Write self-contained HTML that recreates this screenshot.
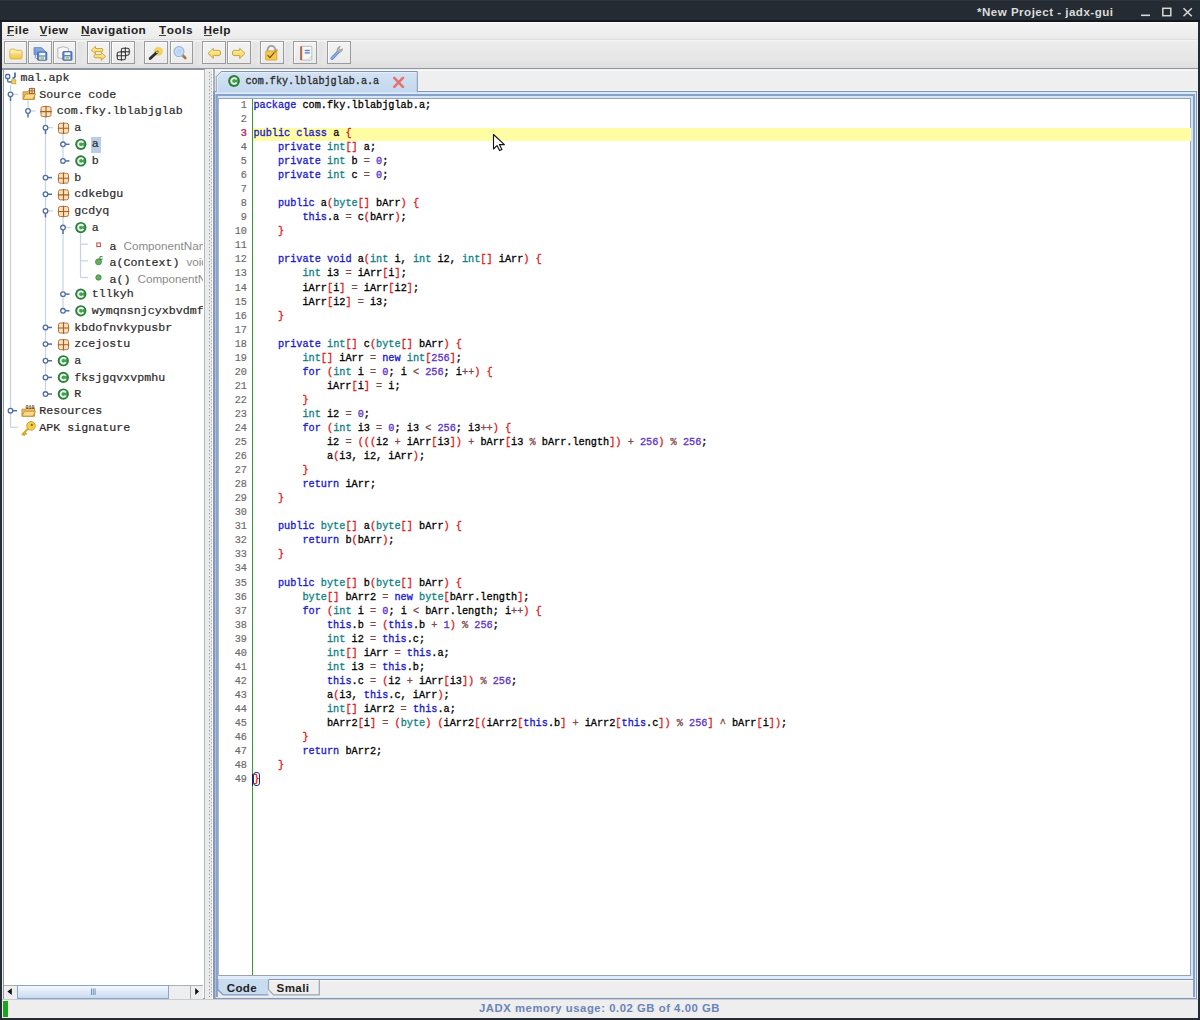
<!DOCTYPE html><html><head><meta charset="utf-8"><style>
*{box-sizing:border-box}
html,body{margin:0;padding:0}
body{width:1200px;height:1020px;overflow:hidden;background:#252b32;position:relative;font-family:"Liberation Sans",sans-serif}
.a{position:absolute}
svg{position:absolute;overflow:visible}
b{font-weight:normal}
#title{left:977px;top:5.3px;color:#dcdcdc;font:bold 11.6px "Liberation Sans",sans-serif;letter-spacing:0.47px;white-space:nowrap}
.menu{position:absolute;top:23.1px;font:bold 11.8px "Liberation Sans",sans-serif;letter-spacing:0.5px;color:#222;white-space:nowrap}
.menu u{text-decoration:none;position:relative}
.menu u:after{content:"";position:absolute;left:0;right:0.5px;top:12px;height:1px;background:#444}
.tb{position:absolute;top:41.4px;width:22.8px;height:23px;border:1px solid #9b9b9b;background:linear-gradient(#f3f3f3,#ebebeb);box-shadow:inset 1px 1px 0 #fdfdfd}
.ln{position:absolute;left:218px;width:29px;text-align:right;font:10.22px "Liberation Mono",monospace;color:#686868;-webkit-text-stroke:0.15px;line-height:14.04px;margin:0}
#src{position:absolute;left:253.4px;top:97.93px;font:10.22px "Liberation Mono",monospace;-webkit-text-stroke:0.3px;line-height:14.04px;white-space:pre;color:#000;margin:0}
.k{color:#1818c8}.t{color:#108282}.s{color:#e01818}.o{color:#804848}.n{color:#6030c4}
.tr{position:absolute;font:11.67px "Liberation Mono",monospace;color:#2a2a2a;white-space:nowrap;-webkit-text-stroke:0.2px;line-height:14px}
.gray{font-family:"Liberation Sans",sans-serif;color:#8a8a8a;-webkit-text-stroke:0}
</style></head><body>
<div class="a" style="left:0;top:0;width:1200px;height:1px;background:#2e353c"></div>
<div class="a" style="left:0;top:20px;width:1200px;height:2px;background:#13191f"></div>
<div id="title" class="a">*New Project - jadx-gui</div>
<svg style="left:0;top:0" width="1200" height="22"><rect x="1141" y="14.5" width="9" height="1.6" fill="#d8d8d8"/><rect x="1162.8" y="8.3" width="8" height="7.4" fill="none" stroke="#d8d8d8" stroke-width="1.5"/><path d="M1183.5 8.2 L1191.8 16.2 M1191.8 8.2 L1183.5 16.2" stroke="#d8d8d8" stroke-width="1.5"/></svg>
<div class="a" style="left:2px;top:22px;width:1196px;height:996px;background:#eeeeee"></div>
<div class="a" style="left:2px;top:22px;width:1196px;height:17px;background:linear-gradient(#fdfdfd 0,#f4f4f4 2px,#ebebeb 16px)"></div>
<div class="a" style="left:2px;top:38.5px;width:1196px;height:1px;background:#dedede"></div>
<div class="menu" style="left:7px"><u>F</u>ile</div>
<div class="menu" style="left:39.5px"><u>V</u>iew</div>
<div class="menu" style="left:81px"><u>N</u>avigation</div>
<div class="menu" style="left:159px"><u>T</u>ools</div>
<div class="menu" style="left:203.5px"><u>H</u>elp</div>
<div class="a" style="left:2px;top:39.5px;width:1196px;height:29px;background:linear-gradient(#f6f6f6 0,#ececec 2px,#e6e6e6 20px,#dedede 28px)"></div>
<div class="a" style="left:2px;top:68.3px;width:1196px;height:1.4px;background:#8d97a1"></div>
<div class="a" style="left:78.3px;top:41.5px;width:6.5px;height:23px;background:linear-gradient(90deg,#e2e2e2,#e8e8e8)"></div>
<div class="a" style="left:136.2px;top:41.5px;width:6.5px;height:23px;background:linear-gradient(90deg,#e2e2e2,#e8e8e8)"></div>
<div class="a" style="left:195.0px;top:41.5px;width:6.5px;height:23px;background:linear-gradient(90deg,#e2e2e2,#e8e8e8)"></div>
<div class="a" style="left:252.6px;top:41.5px;width:6.5px;height:23px;background:linear-gradient(90deg,#e2e2e2,#e8e8e8)"></div>
<div class="a" style="left:285.6px;top:41.5px;width:6.5px;height:23px;background:linear-gradient(90deg,#e2e2e2,#e8e8e8)"></div>
<div class="a" style="left:318.6px;top:41.5px;width:6.5px;height:23px;background:linear-gradient(90deg,#e2e2e2,#e8e8e8)"></div>
<div class="tb" style="left:3.6px;width:23.799999999999997px"></div>
<div class="tb" style="left:28.3px;width:23.400000000000002px"></div>
<div class="tb" style="left:53px;width:23.400000000000006px"></div>
<div class="tb" style="left:86.6px;width:23.80000000000001px"></div>
<div class="tb" style="left:111.2px;width:23.39999999999999px"></div>
<div class="tb" style="left:144.25px;width:24.150000000000006px"></div>
<div class="tb" style="left:169.5px;width:23.0px"></div>
<div class="tb" style="left:202.2px;width:24.0px"></div>
<div class="tb" style="left:227.2px;width:23.400000000000006px"></div>
<div class="tb" style="left:260.3px;width:23.69999999999999px"></div>
<div class="tb" style="left:293.2px;width:24.100000000000023px"></div>
<div class="tb" style="left:326.5px;width:24.100000000000023px"></div>
<svg style="left:0;top:0" width="1200" height="70"><defs><linearGradient id="fg" x1="0" y1="0" x2="0" y2="1"><stop offset="0" stop-color="#fbf0b8"/><stop offset="1" stop-color="#f0c83a"/></linearGradient><linearGradient id="ag" x1="0" y1="0" x2="0" y2="1"><stop offset="0" stop-color="#fff4b0"/><stop offset="1" stop-color="#f4cc50"/></linearGradient></defs><path d="M9.8 50.5 q0 -1.5 1.5 -1.5 h3.2 l1.2 1.3 h4.8 q1.5 0 1.5 1.5 v5.8 q0 1.3 -1.3 1.3 h-9.6 q-1.3 0 -1.3 -1.3 z" fill="url(#fg)" stroke="#dcae48" stroke-width="0.9"/><path d="M10.3 52.2 h11" stroke="#fff8d0" stroke-width="0.8"/><path d="M34 47.6 h7.5 l5 5 v2 h-12.5 z" fill="#86a6e0" stroke="#6486c8" stroke-width="0.8"/><path d="M35.3 49 v8.5 l2 2 h0" fill="none" stroke="#6a8ed0" stroke-width="1"/><rect x="37.5" y="52" width="9.3" height="8.3" rx="0.8" fill="#5c82c8" stroke="#40609e" stroke-width="0.8"/><rect x="39.2" y="52.8" width="6" height="2.6" fill="#f4f8ff"/><rect x="39.2" y="56.6" width="6" height="3" fill="#e6f2e0"/><rect x="40.4" y="57.4" width="3.6" height="1.4" fill="#8cc040"/><path d="M57.8 48.2 q5.2 -3 10.6 0 v9.5 q-5.3 2.2 -10.6 0 z" fill="#f8f8f8" stroke="#a8a8a8" stroke-width="0.8"/><rect x="62.8" y="51.5" width="9.2" height="8.8" rx="0.8" fill="#5c82c8" stroke="#40609e" stroke-width="0.8"/><rect x="64.5" y="52.4" width="5.8" height="2.6" fill="#f4f8ff"/><rect x="64.5" y="56.4" width="5.8" height="3" fill="#e6f2e0"/><rect x="65.6" y="57.2" width="3.6" height="1.4" fill="#8cc040"/><path d="M91.3 50.2 L95.5 46.2 V48.5 H102 Q102.8 48.5 102.8 50 Q102.8 51.6 102 51.6 H95.5 V53.8 Z" fill="url(#ag)" stroke="#c8a038" stroke-width="0.9" stroke-linejoin="round"/><path d="M105.6 56.4 L101.2 52.4 V54.6 H94.8 Q94 54.6 94 56.2 Q94 57.8 94.8 57.8 H101.2 V60.4 Z" fill="url(#ag)" stroke="#c8a038" stroke-width="0.9" stroke-linejoin="round"/><g fill="none" stroke="#353535" stroke-width="1.05"><rect x="121.4" y="48.2" width="7.8" height="7" rx="1.6"/><path d="M125.3 47.3 v9 M120.6 51.7 h9.6"/><rect x="117.3" y="51.9" width="8.2" height="7.8" rx="1.8" fill="#f0f0f0"/><path d="M121.4 50.8 v10 M116.4 55.8 h10"/></g><circle cx="158.4" cy="51.3" r="4.4" fill="#f2cc38" opacity="0.85"/><circle cx="158.4" cy="51.3" r="2.2" fill="#f8dc60"/><path d="M150.2 58.6 L157.2 52" stroke="#2e2e2e" stroke-width="2.8" stroke-linecap="round"/><path d="M156.4 52.6 L157.6 51.6" stroke="#f8f8f0" stroke-width="1.6"/><path d="M182.2 54.8 L185.3 58" stroke="#a87838" stroke-width="2.6" stroke-linecap="round"/><circle cx="179" cy="51.6" r="4.9" fill="#cde0f8" stroke="#98b4e0" stroke-width="1.2"/><circle cx="179" cy="51.6" r="2.8" fill="#bcd4f4"/><path d="M208 53.4 L213.3 48.3 V50.4 H219 Q220.6 50.4 220.6 53 Q220.6 55.6 219 55.6 H213.3 V58.5 Z" fill="url(#ag)" stroke="#c8a038" stroke-width="0.95" stroke-linejoin="round"/><path d="M245 53.4 L239.7 48.3 V50.4 H234 Q232.4 50.4 232.4 53 Q232.4 55.6 234 55.6 H239.7 V58.5 Z" fill="url(#ag)" stroke="#c8a038" stroke-width="0.95" stroke-linejoin="round"/><path d="M267.5 51.5 V49.8 a3.9 3.9 0 0 1 7.8 0 V51.5" fill="none" stroke="#9c9c9c" stroke-width="1.7"/><rect x="265.6" y="50.9" width="11.2" height="9.2" rx="0.8" fill="#f4c84a" stroke="#d4a030" stroke-width="0.8"/><path d="M267.6 55 l2.3 2.6 l5.6 -6.4" fill="none" stroke="#6a4a10" stroke-width="1.1"/><path d="M274.2 52.8 L277.5 49.5" stroke="#e08838" stroke-width="1.6"/><rect x="300.4" y="46.3" width="11.4" height="13.8" rx="0.8" fill="#f8f8f8" stroke="#b0b0b0" stroke-width="0.8"/><path d="M301.2 46.4 v13.6" stroke="#b06a48" stroke-width="2"/><rect x="304.8" y="49.8" width="5" height="1.4" fill="#5a86d0"/><rect x="304.8" y="52.2" width="5" height="1.4" fill="#5a86d0"/><path d="M309 58.5 l2 -2" stroke="#a0a8b0" stroke-width="0.8"/><path d="M332 58.3 L338.5 51.6" stroke="#6d95d8" stroke-width="3.3" stroke-linecap="round"/><path d="M332 58.3 L338.5 51.6" stroke="#9cbcee" stroke-width="1" stroke-linecap="round"/><path d="M338.2 52.2 a3.4 3.4 0 0 1 2 -5.8 l-1.3 2.2 l1.3 1.4 l2.3 -1.2 a3.4 3.4 0 0 1 -4.3 3.4 z" fill="#b8b8b8" stroke="#8a8a8a" stroke-width="0.7"/></svg>
<div class="a" style="left:3px;top:69px;width:202px;height:930px;background:#fff;border:1px solid #8d97a1;border-top-width:1.5px;border-right:1.8px solid #b0b8c0"></div>
<div class="a" style="left:205px;top:69px;width:8px;height:930px;background:#ececec"></div>
<svg style="left:209px;top:72px" width="4" height="925"><defs><pattern id="dots" width="4" height="3.5" patternUnits="userSpaceOnUse"><rect x="0" y="0" width="1" height="1.2" fill="#8a8a8a"/><rect x="2" y="1.75" width="1" height="1.2" fill="#9a9a9a"/></pattern></defs><rect width="4" height="925" fill="url(#dots)"/></svg>
<div class="a" style="left:4px;top:70px;width:199px;height:915px;overflow:hidden">
<div class="a" style="left:-4px;top:-70px;width:1200px;height:1020px">
<div class="a" style="left:90.5px;top:137px;width:10.5px;height:16px;background:#b8cee6"></div>
<svg style="left:0;top:0" width="1200" height="1020"><path d="M10.5 84.68 V427.33" stroke="#c5d2e3" stroke-width="1.2"/><path d="M28.0 100.33000000000001 V110.98" stroke="#c5d2e3" stroke-width="1.2"/><path d="M45.5 116.98 V394.03" stroke="#c5d2e3" stroke-width="1.2"/><path d="M63.0 133.63 V160.93" stroke="#c5d2e3" stroke-width="1.2"/><path d="M63.0 216.88 V310.78" stroke="#c5d2e3" stroke-width="1.2"/><path d="M80.5 233.53 V277.48" stroke="#c5d2e3" stroke-width="1.2"/><g transform="translate(5,72)"><rect x="0.7" y="2.5" width="4" height="4" rx="1" fill="none" stroke="#4a6ea8" stroke-width="1.3"/><path d="M2.7 6.5 V9.3 Q2.7 10 4 10 H7" fill="none" stroke="#4a6ea8" stroke-width="1.3"/><rect x="6.8" y="7.8" width="4" height="4" fill="#f6d060" stroke="#c89a30" stroke-width="0.8"/><path d="M10 0.5 V4.5 Q10 6 8.3 6 H7.5" fill="none" stroke="#2a5a90" stroke-width="1.5"/></g><path d="M13.0 94.33000000000001 H18.0" stroke="#c5d2e3" stroke-width="1.2"/><path d="M10.5 96.63000000000001 V100.83000000000001" stroke="#4f6ea6" stroke-width="1.5"/><circle cx="10.5" cy="94.33000000000001" r="2.3" fill="#fff" stroke="#4f6ea6" stroke-width="1.3"/><g transform="translate(22.5,87.83000000000001)"><path d="M0.5 4 h4 l1 -1 h6.5 v8.5 h-11.5 z" fill="#f0c060" stroke="#c08830" stroke-width="0.9"/><path d="M0.5 11.5 L3 6 H13 L10.5 11.5 Z" fill="#fadb8a" stroke="#c08830" stroke-width="0.9"/><rect x="7" y="0.5" width="5" height="5" fill="#f8d8b0" stroke="#8a5020" stroke-width="0.8"/><path d="M9.5 0 v6 M6.5 3 h6" stroke="#8a5020" stroke-width="0.7"/></g><path d="M30.5 110.98 H35.5" stroke="#c5d2e3" stroke-width="1.2"/><path d="M28.0 113.28 V117.48" stroke="#4f6ea6" stroke-width="1.5"/><circle cx="28.0" cy="110.98" r="2.3" fill="#fff" stroke="#4f6ea6" stroke-width="1.3"/><g transform="translate(40.5,106.08)"><rect x="0.5" y="0.5" width="10" height="10" rx="1.8" fill="#fbe0b8" stroke="#b8743c" stroke-width="1"/><path d="M5.5 -0.3 V11.3 M-0.3 5.5 H11.3" stroke="#a0602c" stroke-width="1.1"/></g><path d="M48.0 127.63 H53.0" stroke="#c5d2e3" stroke-width="1.2"/><path d="M45.5 129.93 V134.13" stroke="#4f6ea6" stroke-width="1.5"/><circle cx="45.5" cy="127.63" r="2.3" fill="#fff" stroke="#4f6ea6" stroke-width="1.3"/><g transform="translate(58.0,122.72999999999999)"><rect x="0.5" y="0.5" width="10" height="10" rx="1.8" fill="#fbe0b8" stroke="#b8743c" stroke-width="1"/><path d="M5.5 -0.3 V11.3 M-0.3 5.5 H11.3" stroke="#a0602c" stroke-width="1.1"/></g><path d="M65.3 144.28 H69.5" stroke="#4f6ea6" stroke-width="1.5"/><circle cx="63.0" cy="144.28" r="2.3" fill="#fff" stroke="#4f6ea6" stroke-width="1.3"/><circle cx="80.8" cy="144.28" r="5.6" fill="#2a7e38"/><circle cx="80.8" cy="144.28" r="4" fill="#48a058"/><path d="M83.3 142.78 A2.8 2.8 0 1 0 83.3 145.78" fill="none" stroke="#eef8ee" stroke-width="1.8"/><path d="M65.3 160.93 H69.5" stroke="#4f6ea6" stroke-width="1.5"/><circle cx="63.0" cy="160.93" r="2.3" fill="#fff" stroke="#4f6ea6" stroke-width="1.3"/><circle cx="80.8" cy="160.93" r="5.6" fill="#2a7e38"/><circle cx="80.8" cy="160.93" r="4" fill="#48a058"/><path d="M83.3 159.43 A2.8 2.8 0 1 0 83.3 162.43" fill="none" stroke="#eef8ee" stroke-width="1.8"/><path d="M47.8 177.57999999999998 H52.0" stroke="#4f6ea6" stroke-width="1.5"/><circle cx="45.5" cy="177.57999999999998" r="2.3" fill="#fff" stroke="#4f6ea6" stroke-width="1.3"/><g transform="translate(58.0,172.67999999999998)"><rect x="0.5" y="0.5" width="10" height="10" rx="1.8" fill="#fbe0b8" stroke="#b8743c" stroke-width="1"/><path d="M5.5 -0.3 V11.3 M-0.3 5.5 H11.3" stroke="#a0602c" stroke-width="1.1"/></g><path d="M47.8 194.23 H52.0" stroke="#4f6ea6" stroke-width="1.5"/><circle cx="45.5" cy="194.23" r="2.3" fill="#fff" stroke="#4f6ea6" stroke-width="1.3"/><g transform="translate(58.0,189.32999999999998)"><rect x="0.5" y="0.5" width="10" height="10" rx="1.8" fill="#fbe0b8" stroke="#b8743c" stroke-width="1"/><path d="M5.5 -0.3 V11.3 M-0.3 5.5 H11.3" stroke="#a0602c" stroke-width="1.1"/></g><path d="M48.0 210.88 H53.0" stroke="#c5d2e3" stroke-width="1.2"/><path d="M45.5 213.18 V217.38" stroke="#4f6ea6" stroke-width="1.5"/><circle cx="45.5" cy="210.88" r="2.3" fill="#fff" stroke="#4f6ea6" stroke-width="1.3"/><g transform="translate(58.0,205.98)"><rect x="0.5" y="0.5" width="10" height="10" rx="1.8" fill="#fbe0b8" stroke="#b8743c" stroke-width="1"/><path d="M5.5 -0.3 V11.3 M-0.3 5.5 H11.3" stroke="#a0602c" stroke-width="1.1"/></g><path d="M65.5 227.53 H70.5" stroke="#c5d2e3" stroke-width="1.2"/><path d="M63.0 229.83 V234.03" stroke="#4f6ea6" stroke-width="1.5"/><circle cx="63.0" cy="227.53" r="2.3" fill="#fff" stroke="#4f6ea6" stroke-width="1.3"/><circle cx="80.8" cy="227.53" r="5.6" fill="#2a7e38"/><circle cx="80.8" cy="227.53" r="4" fill="#48a058"/><path d="M83.3 226.03 A2.8 2.8 0 1 0 83.3 229.03" fill="none" stroke="#eef8ee" stroke-width="1.8"/><path d="M80.5 244.18 H88.0" stroke="#c5d2e3" stroke-width="1.2"/><rect x="96.8" y="242.98000000000002" width="3.6" height="3.6" fill="#fff" stroke="#d04040" stroke-width="1"/><path d="M80.5 260.83 H88.0" stroke="#c5d2e3" stroke-width="1.2"/><circle cx="98.5" cy="261.83" r="3" fill="#60b060" stroke="#3a8a3a" stroke-width="0.8"/><text x="99" y="259.63" font-family="Liberation Sans" font-size="7" font-weight="bold" fill="#2a7a2a">c</text><path d="M80.5 277.48 H88.0" stroke="#c5d2e3" stroke-width="1.2"/><circle cx="98.5" cy="277.48" r="2.7" fill="#60b060" stroke="#3a8a3a" stroke-width="0.8"/><path d="M65.3 294.13 H69.5" stroke="#4f6ea6" stroke-width="1.5"/><circle cx="63.0" cy="294.13" r="2.3" fill="#fff" stroke="#4f6ea6" stroke-width="1.3"/><circle cx="80.8" cy="294.13" r="5.6" fill="#2a7e38"/><circle cx="80.8" cy="294.13" r="4" fill="#48a058"/><path d="M83.3 292.63 A2.8 2.8 0 1 0 83.3 295.63" fill="none" stroke="#eef8ee" stroke-width="1.8"/><path d="M65.3 310.78 H69.5" stroke="#4f6ea6" stroke-width="1.5"/><circle cx="63.0" cy="310.78" r="2.3" fill="#fff" stroke="#4f6ea6" stroke-width="1.3"/><circle cx="80.8" cy="310.78" r="5.6" fill="#2a7e38"/><circle cx="80.8" cy="310.78" r="4" fill="#48a058"/><path d="M83.3 309.28 A2.8 2.8 0 1 0 83.3 312.28" fill="none" stroke="#eef8ee" stroke-width="1.8"/><path d="M47.8 327.42999999999995 H52.0" stroke="#4f6ea6" stroke-width="1.5"/><circle cx="45.5" cy="327.42999999999995" r="2.3" fill="#fff" stroke="#4f6ea6" stroke-width="1.3"/><g transform="translate(58.0,322.53)"><rect x="0.5" y="0.5" width="10" height="10" rx="1.8" fill="#fbe0b8" stroke="#b8743c" stroke-width="1"/><path d="M5.5 -0.3 V11.3 M-0.3 5.5 H11.3" stroke="#a0602c" stroke-width="1.1"/></g><path d="M47.8 344.08 H52.0" stroke="#4f6ea6" stroke-width="1.5"/><circle cx="45.5" cy="344.08" r="2.3" fill="#fff" stroke="#4f6ea6" stroke-width="1.3"/><g transform="translate(58.0,339.18)"><rect x="0.5" y="0.5" width="10" height="10" rx="1.8" fill="#fbe0b8" stroke="#b8743c" stroke-width="1"/><path d="M5.5 -0.3 V11.3 M-0.3 5.5 H11.3" stroke="#a0602c" stroke-width="1.1"/></g><path d="M47.8 360.72999999999996 H52.0" stroke="#4f6ea6" stroke-width="1.5"/><circle cx="45.5" cy="360.72999999999996" r="2.3" fill="#fff" stroke="#4f6ea6" stroke-width="1.3"/><circle cx="63.3" cy="360.72999999999996" r="5.6" fill="#2a7e38"/><circle cx="63.3" cy="360.72999999999996" r="4" fill="#48a058"/><path d="M65.8 359.22999999999996 A2.8 2.8 0 1 0 65.8 362.22999999999996" fill="none" stroke="#eef8ee" stroke-width="1.8"/><path d="M47.8 377.38 H52.0" stroke="#4f6ea6" stroke-width="1.5"/><circle cx="45.5" cy="377.38" r="2.3" fill="#fff" stroke="#4f6ea6" stroke-width="1.3"/><circle cx="63.3" cy="377.38" r="5.6" fill="#2a7e38"/><circle cx="63.3" cy="377.38" r="4" fill="#48a058"/><path d="M65.8 375.88 A2.8 2.8 0 1 0 65.8 378.88" fill="none" stroke="#eef8ee" stroke-width="1.8"/><path d="M47.8 394.03 H52.0" stroke="#4f6ea6" stroke-width="1.5"/><circle cx="45.5" cy="394.03" r="2.3" fill="#fff" stroke="#4f6ea6" stroke-width="1.3"/><circle cx="63.3" cy="394.03" r="5.6" fill="#2a7e38"/><circle cx="63.3" cy="394.03" r="4" fill="#48a058"/><path d="M65.8 392.53 A2.8 2.8 0 1 0 65.8 395.53" fill="none" stroke="#eef8ee" stroke-width="1.8"/><path d="M12.8 410.68 H17.0" stroke="#4f6ea6" stroke-width="1.5"/><circle cx="10.5" cy="410.68" r="2.3" fill="#fff" stroke="#4f6ea6" stroke-width="1.3"/><g transform="translate(21.5,404.18)"><path d="M0.5 5 h4 l1 -1 h7.5 v8 h-12.5 z" fill="#f0c060" stroke="#c08830" stroke-width="0.9"/><path d="M0.5 12 L3 7 H14 L11.5 12 Z" fill="#fadb8a" stroke="#c08830" stroke-width="0.9"/><text x="4" y="4.5" font-family="Liberation Mono" font-size="5" font-weight="bold" fill="#5a4020">010</text></g><path d="M10.5 427.33 H18.0" stroke="#c5d2e3" stroke-width="1.2"/><g transform="translate(21.0,420.83)"><circle cx="10" cy="5" r="4.3" fill="#f6d050" stroke="#c89a20" stroke-width="0.9"/><circle cx="10.8" cy="4.2" r="1.2" fill="#a07010"/><path d="M7 8 L1.5 13.5 M3.5 11.5 l1.5 1.5 M2 13 l1.2 1.2" stroke="#d8a828" stroke-width="2" stroke-linecap="round"/></g></svg>
<div class="tr" style="left:20.5px;top:70.88000000000001px">mal.apk</div>
<div class="tr" style="left:39.3px;top:87.53000000000002px">Source code</div>
<div class="tr" style="left:56.8px;top:104.18px">com.fky.lblabjglab</div>
<div class="tr" style="left:74.3px;top:120.83px">a</div>
<div class="tr" style="left:91.8px;top:137.48px">a</div>
<div class="tr" style="left:91.8px;top:154.13px">b</div>
<div class="tr" style="left:74.3px;top:170.77999999999997px">b</div>
<div class="tr" style="left:74.3px;top:187.42999999999998px">cdkebgu</div>
<div class="tr" style="left:74.3px;top:204.07999999999998px">gcdyq</div>
<div class="tr" style="left:91.8px;top:220.73px">a</div>
<div class="tr" style="left:109.5px;top:238.68px">a <span class="gray">ComponentName</span></div>
<div class="tr" style="left:109.5px;top:255.32999999999998px">a(Context) <span class="gray">void</span></div>
<div class="tr" style="left:109.5px;top:271.98px">a() <span class="gray">ComponentName</span></div>
<div class="tr" style="left:91.8px;top:287.33px">tllkyh</div>
<div class="tr" style="left:91.8px;top:303.97999999999996px">wymqnsnjcyxbvdmf</div>
<div class="tr" style="left:74.3px;top:320.62999999999994px">kbdofnvkypusbr</div>
<div class="tr" style="left:74.3px;top:337.28px">zcejostu</div>
<div class="tr" style="left:74.3px;top:353.92999999999995px">a</div>
<div class="tr" style="left:74.3px;top:370.58px">fksjgqvxvpmhu</div>
<div class="tr" style="left:74.3px;top:387.22999999999996px">R</div>
<div class="tr" style="left:39.3px;top:403.88px">Resources</div>
<div class="tr" style="left:39.3px;top:420.53px">APK signature</div>
</div></div>
<div class="a" style="left:4px;top:985px;width:199px;height:14px;background:#eeeeee;border-top:1px solid #a8b0b8"></div>
<div class="a" style="left:17px;top:985px;width:152px;height:13.5px;background:linear-gradient(#f4f8fd,#c8daf0);border:1px solid #8da4c8"></div>
<div class="a" style="left:189.5px;top:985.5px;width:1px;height:13px;background:#a8b0b8"></div>
<svg style="left:0;top:0" width="1200" height="1020"><path d="M11.8 988.3 V995 L7.4 991.6 Z" fill="#111"/><path d="M195.2 988 V995 L199 991.5 Z" fill="#111"/><path d="M91.5 988.5 v6.5 M93.3 988.5 v6.5 M95.1 988.5 v6.5" stroke="#6a86b8" stroke-width="0.9"/></svg>
<div class="a" style="left:212.5px;top:69.4px;width:985.5px;height:930px;background:#efefef"></div>
<div class="a" style="left:213.1px;top:69.4px;width:1.5px;height:22px;background:#a8b0b8"></div>
<div class="a" style="left:214.6px;top:69.6px;width:983px;height:1px;background:#fafafa"></div>
<div class="a" style="left:214.6px;top:90px;width:983px;height:1px;background:#eef6fd"></div>
<div class="a" style="left:213.1px;top:90.9px;width:984.1999999999999px;height:908.6px;background:#8898b4"></div>
<div class="a" style="left:214.8px;top:91.9px;width:981.5px;height:906.4px;background:#dce9f9"></div>
<div class="a" style="left:216.0px;top:94.0px;width:978.8px;height:904.3px;background:#86a2cc"></div>
<div class="a" style="left:217.3px;top:96.0px;width:975.7px;height:902.3px;background:#d2e6fa"></div>
<div class="a" style="left:217.3px;top:97.8px;width:974.0px;height:878.2px;background:#9aa4b0"></div>
<div class="a" style="left:214.8px;top:94.0px;width:1.6999999999999886px;height:904.3px;background:#a4c0e8"></div>
<div class="a" style="left:216.5px;top:96.0px;width:1.5px;height:902.3px;background:#90a8cc"></div>
<div class="a" style="left:218.0px;top:97.8px;width:1.0px;height:878.2px;background:#aab4c4"></div>
<div class="a" style="left:218.5px;top:99.0px;width:971.9000000000001px;height:876.0px;background:#ffffff"></div>
<div class="a" style="left:212.0px;top:69.4px;width:1.0999999999999943px;height:930.1px;background:#f8fbff"></div>
<div class="a" style="left:218.0px;top:976.0px;width:975.0px;height:2.5px;background:#e0ecfc"></div>
<div class="a" style="left:218.0px;top:978.5px;width:975.0px;height:1.5px;background:#8094b8"></div>
<div class="a" style="left:218.0px;top:980.0px;width:975.0px;height:1.0px;background:#fafafa"></div>
<div class="a" style="left:218.0px;top:981.0px;width:975.0px;height:16.0px;background:#eeeeee"></div>
<div class="a" style="left:216.0px;top:997.0px;width:978.8px;height:1.2999999999999545px;background:#e4eaf4"></div>
<svg style="left:214px;top:70px" width="206" height="22" viewBox="0 0 206 22"><defs><linearGradient id="tg" x1="0" y1="0" x2="0" y2="1"><stop offset="0" stop-color="#d4e3f4"/><stop offset="1" stop-color="#c4d7ee"/></linearGradient></defs><path d="M2.3 22.2 V6.5 L7.3 1.5 H203.3 V22.2" fill="url(#tg)" stroke="#8294b4" stroke-width="1"/><path d="M3.3 22.2 V7 L7.8 2.5 H202.3" fill="none" stroke="#e6eef9" stroke-width="1"/></svg>
<svg style="left:0;top:0" width="1200" height="120"><circle cx="234" cy="81" r="5.9" fill="#2a7e38"/><circle cx="234" cy="81" r="4.2" fill="#48a058"/><path d="M236.6 79.4 A2.9 2.9 0 1 0 236.6 82.6" fill="none" stroke="#eef8ee" stroke-width="1.8"/><path d="M394.3 77.9 L402.9 86.8 M402.9 77.9 L394.3 86.8" stroke="#e47272" stroke-width="2.6" stroke-linecap="round"/></svg>
<div class="tr" style="left:245.5px;top:75px;font-size:10.15px;color:#2a2a2a;-webkit-text-stroke:0.3px">com.fky.lblabjglab.a.a</div>
<div class="a" style="left:253px;top:127.5px;width:937.5px;height:13.9px;background:#fffda4"></div>
<div class="a" style="left:251.8px;top:99px;width:1.3px;height:876px;background:#3c9a3c"></div>
<pre class="ln" style="top:97.93px">1
2
3
4
5
6
7
8
9
10
11
12
13
14
15
16
17
18
19
20
21
22
23
24
25
26
27
28
29
30
31
32
33
34
35
36
37
38
39
40
41
42
43
44
45
46
47
48
49</pre>
<div class="ln" style="top:125.99px;color:#d02a7a;-webkit-text-stroke:0.2px">3</div>
<pre id="src"><b class=k>package</b> com.fky.lblabjglab.a;

<b class=k>public</b> <b class=k>class</b> a <b class=s>{</b>
    <b class=k>private</b> <b class=t>int</b><b class=s>[</b><b class=s>]</b> a;
    <b class=k>private</b> <b class=t>int</b> b <b class=o>=</b> <b class=n>0</b>;
    <b class=k>private</b> <b class=t>int</b> c <b class=o>=</b> <b class=n>0</b>;

    <b class=k>public</b> a<b class=s>(</b><b class=t>byte</b><b class=s>[</b><b class=s>]</b> bArr<b class=s>)</b> <b class=s>{</b>
        <b class=k>this</b>.a <b class=o>=</b> c<b class=s>(</b>bArr<b class=s>)</b>;
    <b class=s>}</b>

    <b class=k>private</b> <b class=k>void</b> a<b class=s>(</b><b class=t>int</b> i, <b class=t>int</b> i2, <b class=t>int</b><b class=s>[</b><b class=s>]</b> iArr<b class=s>)</b> <b class=s>{</b>
        <b class=t>int</b> i3 <b class=o>=</b> iArr<b class=s>[</b>i<b class=s>]</b>;
        iArr<b class=s>[</b>i<b class=s>]</b> <b class=o>=</b> iArr<b class=s>[</b>i2<b class=s>]</b>;
        iArr<b class=s>[</b>i2<b class=s>]</b> <b class=o>=</b> i3;
    <b class=s>}</b>

    <b class=k>private</b> <b class=t>int</b><b class=s>[</b><b class=s>]</b> c<b class=s>(</b><b class=t>byte</b><b class=s>[</b><b class=s>]</b> bArr<b class=s>)</b> <b class=s>{</b>
        <b class=t>int</b><b class=s>[</b><b class=s>]</b> iArr <b class=o>=</b> <b class=k>new</b> <b class=t>int</b><b class=s>[</b><b class=n>256</b><b class=s>]</b>;
        <b class=k>for</b> <b class=s>(</b><b class=t>int</b> i <b class=o>=</b> <b class=n>0</b>; i <b class=o>&lt;</b> <b class=n>256</b>; i<b class=o>++</b><b class=s>)</b> <b class=s>{</b>
            iArr<b class=s>[</b>i<b class=s>]</b> <b class=o>=</b> i;
        <b class=s>}</b>
        <b class=t>int</b> i2 <b class=o>=</b> <b class=n>0</b>;
        <b class=k>for</b> <b class=s>(</b><b class=t>int</b> i3 <b class=o>=</b> <b class=n>0</b>; i3 <b class=o>&lt;</b> <b class=n>256</b>; i3<b class=o>++</b><b class=s>)</b> <b class=s>{</b>
            i2 <b class=o>=</b> <b class=s>(</b><b class=s>(</b><b class=s>(</b>i2 <b class=o>+</b> iArr<b class=s>[</b>i3<b class=s>]</b><b class=s>)</b> <b class=o>+</b> bArr<b class=s>[</b>i3 <b class=o>%</b> bArr.length<b class=s>]</b><b class=s>)</b> <b class=o>+</b> <b class=n>256</b><b class=s>)</b> <b class=o>%</b> <b class=n>256</b>;
            a<b class=s>(</b>i3, i2, iArr<b class=s>)</b>;
        <b class=s>}</b>
        <b class=k>return</b> iArr;
    <b class=s>}</b>

    <b class=k>public</b> <b class=t>byte</b><b class=s>[</b><b class=s>]</b> a<b class=s>(</b><b class=t>byte</b><b class=s>[</b><b class=s>]</b> bArr<b class=s>)</b> <b class=s>{</b>
        <b class=k>return</b> b<b class=s>(</b>bArr<b class=s>)</b>;
    <b class=s>}</b>

    <b class=k>public</b> <b class=t>byte</b><b class=s>[</b><b class=s>]</b> b<b class=s>(</b><b class=t>byte</b><b class=s>[</b><b class=s>]</b> bArr<b class=s>)</b> <b class=s>{</b>
        <b class=t>byte</b><b class=s>[</b><b class=s>]</b> bArr2 <b class=o>=</b> <b class=k>new</b> <b class=t>byte</b><b class=s>[</b>bArr.length<b class=s>]</b>;
        <b class=k>for</b> <b class=s>(</b><b class=t>int</b> i <b class=o>=</b> <b class=n>0</b>; i <b class=o>&lt;</b> bArr.length; i<b class=o>++</b><b class=s>)</b> <b class=s>{</b>
            <b class=k>this</b>.b <b class=o>=</b> <b class=s>(</b><b class=k>this</b>.b <b class=o>+</b> <b class=n>1</b><b class=s>)</b> <b class=o>%</b> <b class=n>256</b>;
            <b class=t>int</b> i2 <b class=o>=</b> <b class=k>this</b>.c;
            <b class=t>int</b><b class=s>[</b><b class=s>]</b> iArr <b class=o>=</b> <b class=k>this</b>.a;
            <b class=t>int</b> i3 <b class=o>=</b> <b class=k>this</b>.b;
            <b class=k>this</b>.c <b class=o>=</b> <b class=s>(</b>i2 <b class=o>+</b> iArr<b class=s>[</b>i3<b class=s>]</b><b class=s>)</b> <b class=o>%</b> <b class=n>256</b>;
            a<b class=s>(</b>i3, <b class=k>this</b>.c, iArr<b class=s>)</b>;
            <b class=t>int</b><b class=s>[</b><b class=s>]</b> iArr2 <b class=o>=</b> <b class=k>this</b>.a;
            bArr2<b class=s>[</b>i<b class=s>]</b> <b class=o>=</b> <b class=s>(</b><b class=t>byte</b><b class=s>)</b> <b class=s>(</b>iArr2<b class=s>[</b><b class=s>(</b>iArr2<b class=s>[</b><b class=k>this</b>.b<b class=s>]</b> <b class=o>+</b> iArr2<b class=s>[</b><b class=k>this</b>.c<b class=s>]</b><b class=s>)</b> <b class=o>%</b> <b class=n>256</b><b class=s>]</b> <b class=o>^</b> bArr<b class=s>[</b>i<b class=s>]</b><b class=s>)</b>;
        <b class=s>}</b>
        <b class=k>return</b> bArr2;
    <b class=s>}</b>
<b class=s>}</b></pre>
<div class="a" style="left:253.3px;top:772px;width:6.8px;height:14.2px;border:1px solid #2a2aa0;border-radius:3px"></div>
<div class="a" style="left:252px;top:774px;width:1.3px;height:11.5px;background:#222"></div>
<svg style="left:0;top:960px" width="1200" height="60"><path d="M217.7 19 V29.6 L223.2 34.8 H268.5 V19 Z" fill="#c8dcf0"/><path d="M217.7 19 V29.6 L223.2 34.8 H268.5" fill="none" stroke="#8898c0" stroke-width="1.3"/><path d="M268.5 20 V29.6 L273.5 34.8 H319.3 V20" fill="#eeeeee" stroke="#9aa4b4" stroke-width="1.2"/><path d="M269.5 20.5 H318.5" stroke="#fafafa" stroke-width="1"/></svg>
<div class="a" style="left:226.8px;top:981px;font:bold 11.6px 'Liberation Sans',sans-serif;letter-spacing:0.3px;color:#1e1e1e">Code</div>
<div class="a" style="left:276.5px;top:981px;font:bold 11.6px 'Liberation Sans',sans-serif;letter-spacing:0.4px;color:#1e1e1e">Smali</div>
<div class="a" style="left:2px;top:999.3px;width:1196px;height:1px;background:#c6ccd4"></div>
<div class="a" style="left:3px;top:1001px;width:4.5px;height:16px;background:#1aa51a"></div>
<div class="a" style="left:479px;top:1002.4px;font:bold 11.3px 'Liberation Sans',sans-serif;letter-spacing:0.54px;color:#6a84b8;white-space:nowrap">JADX memory usage: 0.02 GB of 4.00 GB</div>
<svg style="left:493px;top:134px" width="14" height="18" viewBox="0 0 14 18"><path d="M0.5 0.5 V15 L4 11.6 L6.6 16.6 L8.9 15.6 L6.4 10.6 H11.4 Z" fill="#fff" stroke="#111" stroke-width="1.1" stroke-linejoin="round"/></svg>
</body></html>
